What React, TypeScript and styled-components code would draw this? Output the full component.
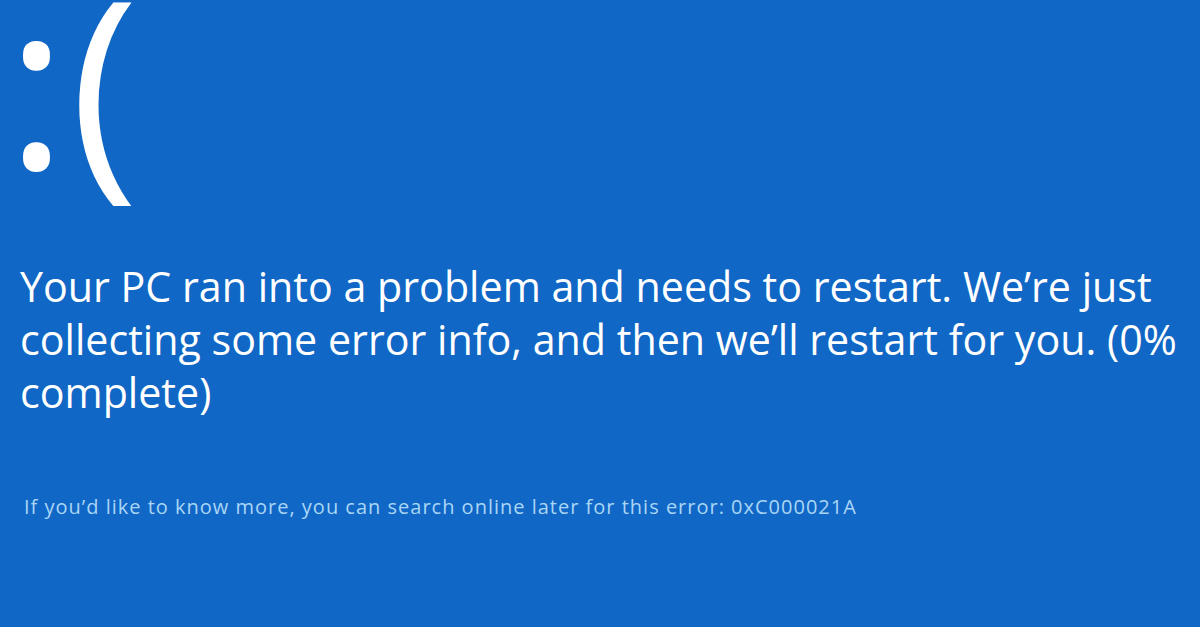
import React from "react";
import styled, { createGlobalStyle } from "styled-components";

const GlobalStyle = createGlobalStyle`
  html, body {
    margin: 0;
    padding: 0;
    background-color: #1167c5;
  }
`;

const Screen = styled.div`
  width: 1200px;
  height: 627px;
  overflow: hidden;
  background-color: #1167c5;
  color: #ffffff;
  font-family: "Open Sans", "Liberation Sans", sans-serif;
  display: flex;
  flex-direction: column;
  padding-left: 20px;
  box-sizing: border-box;
`;

// the sad face sits at the very top and runs a little past the edge, as on the real screen
const Face = styled.div`
  margin-left: -14px;
  font-size: 232px;
  line-height: 159px;
  height: 159px;
  letter-spacing: 3px;
  white-space: nowrap;
`;

const Message = styled.p`
  margin: 101px 0 0 0;
  font-size: 41.2px;
  line-height: 53px;
  white-space: nowrap;
`;

const Hint = styled.p`
  margin: 76px 0 0 4px;
  font-size: 20px;
  line-height: 24px;
  letter-spacing: 1px;
  color: #a9d6f6;
  white-space: nowrap;
`;

const App: React.FC = () => {
  return (
    <>
      <GlobalStyle />
      <Screen>
        <Face>:(</Face>
        <Message>
          Your PC ran into a problem and needs to restart. We’re just
          <br />
          collecting some error info, and then we’ll restart for you. (0%
          <br />
          complete)
        </Message>
        <Hint>
          If you’d like to know more, you can search online later for this error: 0xC000021A
        </Hint>
      </Screen>
    </>
  );
};

export default App;
